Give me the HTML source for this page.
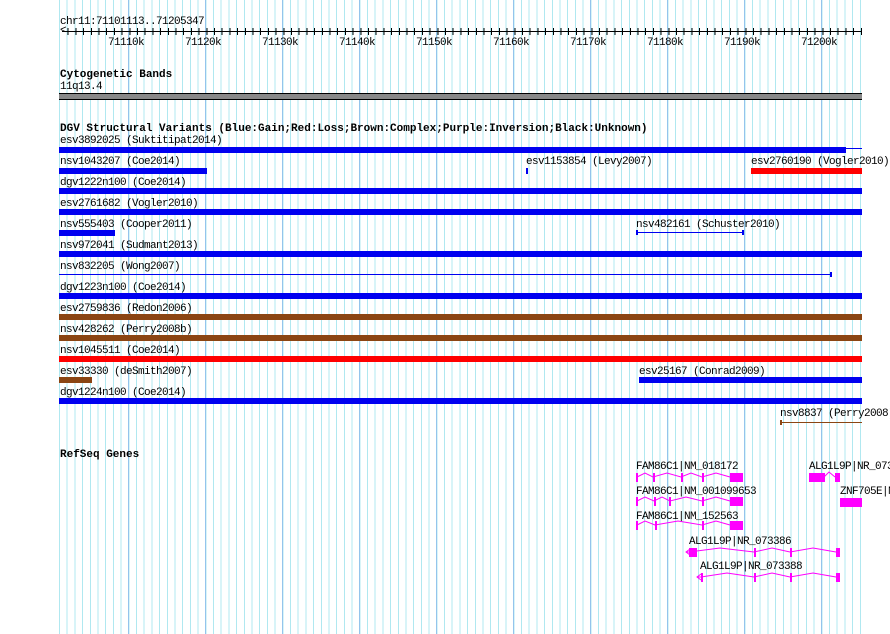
<!DOCTYPE html>
<html><head><meta charset="utf-8"><style>
body{margin:0;width:890px;height:634px;background:#fff;position:relative;overflow:hidden;font-family:"Liberation Mono","DejaVu Sans Mono",monospace;font-size:10px;color:#000}
.grid{position:absolute;left:59px;top:0;width:803px;height:634px;
background:
repeating-linear-gradient(90deg,transparent 0,transparent 69px,#94c4ec 69px,#94c4ec 70px,transparent 70px,transparent 77px),
repeating-linear-gradient(90deg,#b0e8f0 0,#b0e8f0 1px,transparent 1px,transparent 7.7px);}
.t{position:absolute;white-space:pre;line-height:10px;font-size:11px;letter-spacing:-0.6px;transform:translateY(1px)}
.h{position:absolute;white-space:pre;font-weight:bold;font-size:11px;line-height:11px;transform:translateY(2px)}
.b{position:absolute;height:6px}
.bl{background:#0000f0}.rd{background:#ff0000}.br{background:#8b4513}
</style></head><body>
<div class="grid"></div>
<div class="t" style="left:60px;top:16px">chr11:71101113..71205347</div>
<div style="position:absolute;left:62px;top:31px;width:800px;height:1px;background:#000"></div>
<div style="position:absolute;left:62px;top:28px;width:800px;height:7px;background:repeating-linear-gradient(90deg,transparent 0,transparent 5.7px,#000 5.7px,#000 6.7px,transparent 6.7px,transparent 7.7px)"></div>
<div class="t" style="left:60px;top:25px">&lt;</div>
<div class="t" style="left:108px;top:37px">71110k</div>
<div class="t" style="left:185px;top:37px">71120k</div>
<div class="t" style="left:262px;top:37px">71130k</div>
<div class="t" style="left:339px;top:37px">71140k</div>
<div class="t" style="left:416px;top:37px">71150k</div>
<div class="t" style="left:493px;top:37px">71160k</div>
<div class="t" style="left:570px;top:37px">71170k</div>
<div class="t" style="left:647px;top:37px">71180k</div>
<div class="t" style="left:724px;top:37px">71190k</div>
<div class="t" style="left:801px;top:37px">71200k</div>

<div class="h" style="left:60px;top:68px">Cytogenetic Bands</div>
<div class="t" style="left:60px;top:81px">11q13.4</div>
<div style="position:absolute;left:59px;top:93px;width:803px;height:5px;background:#888;border-top:1px solid #000;border-bottom:1px solid #000"></div>

<div class="h" style="left:60px;top:122px">DGV Structural Variants (Blue:Gain;Red:Loss;Brown:Complex;Purple:Inversion;Black:Unknown)</div>
<div class="t" style="left:60px;top:135px">esv3892025 (Suktitipat2014)</div>
<div class="b bl" style="left:59px;top:147px;width:787px"></div>
<div style="position:absolute;left:846px;top:148px;width:16px;height:1px;background:#0000f0"></div>
<div class="t" style="left:60px;top:156px">nsv1043207 (Coe2014)</div>
<div class="b bl" style="left:59px;top:168px;width:148px"></div>
<div class="t" style="left:526px;top:156px">esv1153854 (Levy2007)</div>
<div class="b bl" style="left:526px;top:168px;width:2px"></div>
<div class="t" style="left:751px;top:156px">esv2760190 (Vogler2010)</div>
<div class="b rd" style="left:751px;top:168px;width:111px"></div>
<div class="t" style="left:60px;top:177px">dgv1222n100 (Coe2014)</div>
<div class="b bl" style="left:59px;top:188px;width:803px"></div>
<div class="t" style="left:60px;top:198px">esv2761682 (Vogler2010)</div>
<div class="b bl" style="left:59px;top:209px;width:803px"></div>
<div class="t" style="left:60px;top:219px">nsv555403 (Cooper2011)</div>
<div class="b bl" style="left:59px;top:230px;width:56px"></div>
<div class="t" style="left:636px;top:219px">nsv482161 (Schuster2010)</div>
<div style="position:absolute;left:636px;top:232px;width:107px;height:1px;background:#0000f0"></div>
<div style="position:absolute;left:636px;top:230px;width:2px;height:5px;background:#0000f0"></div>
<div style="position:absolute;left:742px;top:230px;width:2px;height:5px;background:#0000f0"></div>
<div class="t" style="left:60px;top:240px">nsv972041 (Sudmant2013)</div>
<div class="b bl" style="left:59px;top:251px;width:803px"></div>
<div class="t" style="left:60px;top:261px">nsv832205 (Wong2007)</div>
<div style="position:absolute;left:59px;top:274px;width:772px;height:1px;background:#0000f0"></div>
<div style="position:absolute;left:830px;top:272px;width:2px;height:5px;background:#0000f0"></div>
<div class="t" style="left:60px;top:282px">dgv1223n100 (Coe2014)</div>
<div class="b bl" style="left:59px;top:293px;width:803px"></div>
<div class="t" style="left:60px;top:303px">esv2759836 (Redon2006)</div>
<div class="b br" style="left:59px;top:314px;width:803px"></div>
<div class="t" style="left:60px;top:324px">nsv428262 (Perry2008b)</div>
<div class="b br" style="left:59px;top:335px;width:803px"></div>
<div class="t" style="left:60px;top:345px">nsv1045511 (Coe2014)</div>
<div class="b rd" style="left:59px;top:356px;width:803px"></div>
<div class="t" style="left:60px;top:366px">esv33330 (deSmith2007)</div>
<div class="b br" style="left:59px;top:377px;width:33px"></div>
<div class="t" style="left:639px;top:366px">esv25167 (Conrad2009)</div>
<div class="b bl" style="left:639px;top:377px;width:223px"></div>
<div class="t" style="left:60px;top:387px">dgv1224n100 (Coe2014)</div>
<div class="b bl" style="left:59px;top:398px;width:803px"></div>
<div class="t" style="left:780px;top:408px">nsv8837 (Perry2008)</div>
<div style="position:absolute;left:780px;top:422px;width:82px;height:1px;background:#8b4513"></div>
<div style="position:absolute;left:780px;top:420px;width:2px;height:5px;background:#8b4513"></div>

<div class="h" style="left:60px;top:448px">RefSeq Genes</div>
<div class="t" style="left:636px;top:461px">FAM86C1|NM_018172</div>
<div class="t" style="left:809px;top:461px">ALG1L9P|NR_073</div>
<div class="t" style="left:636px;top:486px">FAM86C1|NM_001099653</div>
<div class="t" style="left:840px;top:486px">ZNF705E|N</div>
<div class="t" style="left:636px;top:511px">FAM86C1|NM_152563</div>
<div class="t" style="left:689px;top:536px">ALG1L9P|NR_073386</div>
<div class="t" style="left:700px;top:561px">ALG1L9P|NR_073388</div>
<svg style="position:absolute;left:0;top:0" width="890" height="634" fill="#f0f" stroke="#f0f">
<g stroke-width="1" fill="none">
<polyline points="637,477 645,473 653,477 667,473 681,477 691,473 702,477 716,473 730,477"/>
<polyline points="637,501 645,497 654,501 662,497 670,501 686,497 702,501 716,497 730,501"/>
<polyline points="637,525 645,521 655,525 678,521 702,525 716,521 730,525"/>
<polyline points="824,477 829,472 835,477"/>
<polyline points="689,552 720,548 754,552 772,548 790,552 813,548 836,552"/>
<polyline points="701,577 727,573 754,577 772,573 790,577 813,573 836,577"/>
<polyline points="686,552 696,552"/><polyline points="690,549 686,552 690,555"/>
<polyline points="697,577 701,577"/><polyline points="701,574 697,577 701,580"/>
</g>
<g stroke="none">
<rect x="636" y="473" width="2" height="9"/><rect x="653" y="473" width="2" height="9"/><rect x="681" y="473" width="2" height="9"/><rect x="702" y="473" width="2" height="9"/><rect x="730" y="473" width="13" height="9"/>
<rect x="636" y="497" width="2" height="9"/><rect x="654" y="497" width="2" height="9"/><rect x="669" y="497" width="2" height="9"/><rect x="702" y="497" width="2" height="9"/><rect x="730" y="497" width="13" height="9"/>
<rect x="636" y="521" width="2" height="9"/><rect x="655" y="521" width="2" height="9"/><rect x="702" y="521" width="2" height="9"/><rect x="730" y="521" width="13" height="9"/>
<rect x="809" y="473" width="16" height="9"/><rect x="835" y="473" width="5" height="9"/>
<rect x="840" y="498" width="22" height="9"/>
<rect x="689" y="548" width="8" height="9"/><rect x="754" y="548" width="2" height="9"/><rect x="790" y="548" width="2" height="9"/><rect x="836" y="548" width="4" height="9"/>
<rect x="701" y="573" width="2" height="9"/><rect x="754" y="573" width="2" height="9"/><rect x="790" y="573" width="2" height="9"/><rect x="836" y="573" width="4" height="9"/>
</g></svg>
</body></html>
